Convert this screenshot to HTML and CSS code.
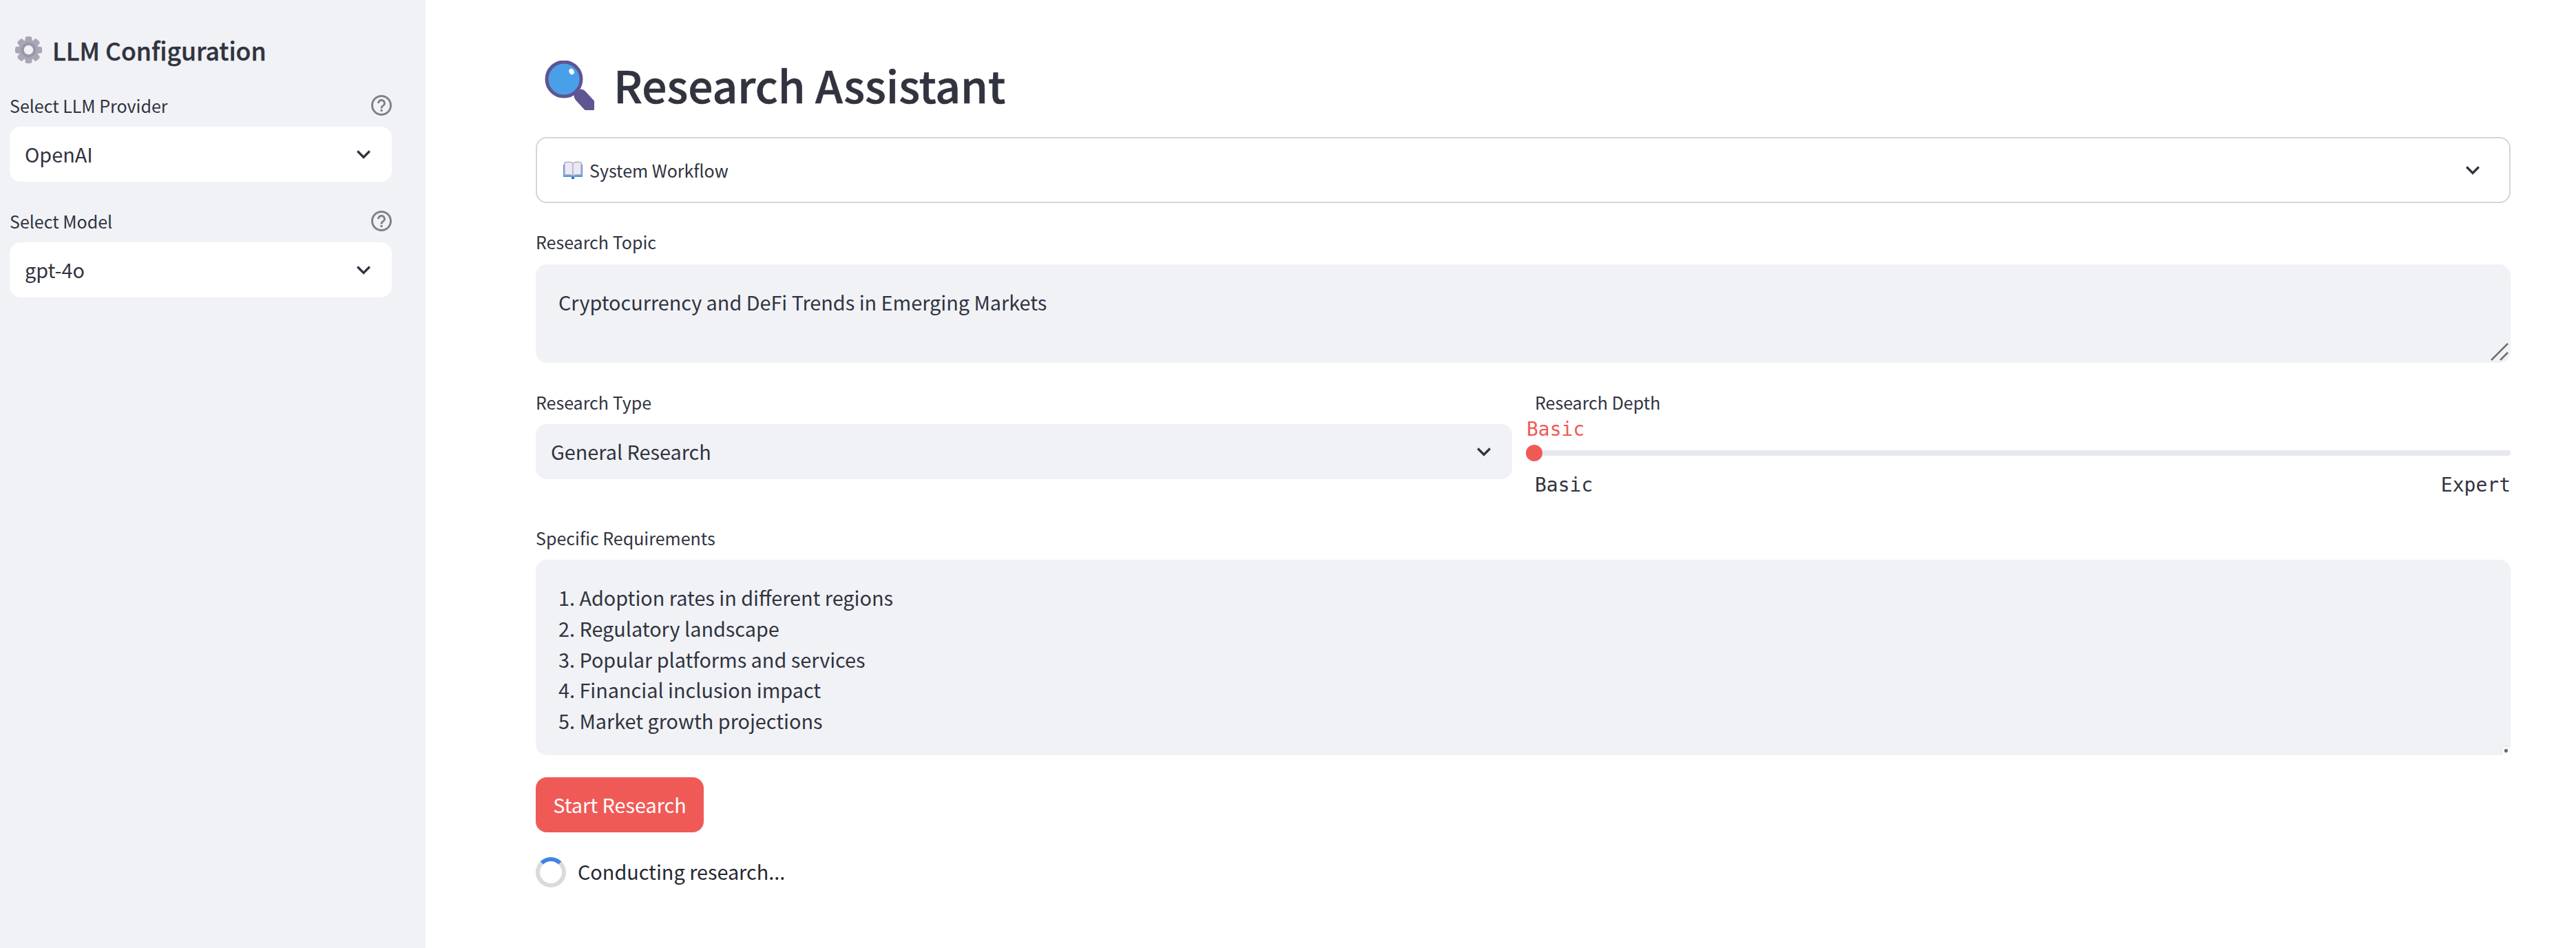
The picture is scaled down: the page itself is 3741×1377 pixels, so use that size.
FILE: index.html
```html
<!DOCTYPE html>
<html lang="en">
<head>
    <meta charset="UTF-8">
    <meta name="viewport" content="width=device-width, initial-scale=1.0">
    <title>Research Assistant</title>
    <link rel="stylesheet" href="styles.css">
</head>
<body>
    <aside class="sidebar">
        <h2 class="sidebar-title">
            <svg class="gear-icon" viewBox="0 0 40 40">
                <g fill="#aaa6b5">
                    <rect x="15" y="0" width="10" height="40" rx="3"/>
                    <rect x="15" y="0" width="10" height="40" rx="3" transform="rotate(45 20 20)"/>
                    <rect x="15" y="0" width="10" height="40" rx="3" transform="rotate(90 20 20)"/>
                    <rect x="15" y="0" width="10" height="40" rx="3" transform="rotate(135 20 20)"/>
                    <circle cx="20" cy="20" r="15"/>
                </g>
                <circle cx="20" cy="20" r="9" fill="#f0f2f6" stroke="#9a96a8" stroke-width="4"/>
            </svg>
            LLM Configuration
        </h2>

        <div class="side-field">
            <div class="side-label">
                <span>Select LLM Provider</span>
                <svg class="help-icon" viewBox="0 0 24 24"><path d="M11 18h2v-2h-2v2zm1-16C6.48 2 2 6.48 2 12s4.48 10 10 10 10-4.48 10-10S17.52 2 12 2zm0 18c-4.41 0-8-3.59-8-8s3.59-8 8-8 8 3.59 8 8-3.59 8-8 8zm0-14c-2.21 0-4 1.79-4 4h2c0-1.1.9-2 2-2s2 .9 2 2c0 2-3 1.75-3 5h2c0-2.25 3-2.5 3-5 0-2.21-1.79-4-4-4z"/></svg>
            </div>
            <div class="select select-white">
                <span>OpenAI</span>
                <svg class="chevron" viewBox="0 0 24 24"><path d="M16.59 8.59L12 13.17 7.41 8.59 6 10l6 6 6-6z"/></svg>
            </div>
        </div>

        <div class="side-field">
            <div class="side-label">
                <span>Select Model</span>
                <svg class="help-icon" viewBox="0 0 24 24"><path d="M11 18h2v-2h-2v2zm1-16C6.48 2 2 6.48 2 12s4.48 10 10 10 10-4.48 10-10S17.52 2 12 2zm0 18c-4.41 0-8-3.59-8-8s3.59-8 8-8 8 3.59 8 8-3.59 8-8 8zm0-14c-2.21 0-4 1.79-4 4h2c0-1.1.9-2 2-2s2 .9 2 2c0 2-3 1.75-3 5h2c0-2.25 3-2.5 3-5 0-2.21-1.79-4-4-4z"/></svg>
            </div>
            <div class="select select-white">
                <span>gpt-4o</span>
                <svg class="chevron" viewBox="0 0 24 24"><path d="M16.59 8.59L12 13.17 7.41 8.59 6 10l6 6 6-6z"/></svg>
            </div>
        </div>
    </aside>

    <main class="main">
        <h1 class="page-title">
            <svg class="lens-icon" viewBox="0 0 72 72">
                <path d="M46 45l4 4" stroke="#5f5593" stroke-width="8"/>
                <path d="M52 51l13 14" stroke="#5f5593" stroke-width="19" stroke-linecap="round"/>
                <circle cx="28" cy="27" r="25" fill="#4aa0e8" stroke="#5f5593" stroke-width="5"/>
                <ellipse cx="39" cy="16" rx="3.500" ry="4.500" fill="white" transform="rotate(-25 39 16)"/>
            </svg>
            <span class="page-title-text">Research Assistant</span>
        </h1>

        <div class="expander">
            <span class="expander-title">
                <svg class="book-icon" viewBox="0 0 30 26">
                    <path d="M1 5h28v18H1z" fill="#4a9ae0"/>
                    <path d="M3 2c4-1 9-1 12 1v18c-3-1.500-8-1.500-12-1z" fill="#ece9f5" stroke="#b4b1c4" stroke-width="1.500"/>
                    <path d="M27 2c-4-1-9-1-12 1v18c3-1.500 8-1.500 12-1z" fill="#ece9f5" stroke="#b4b1c4" stroke-width="1.500"/>
                    <path d="M13 23h4v3h-4z" fill="#2f6fb5"/>
                </svg>
                System Workflow
            </span>
            <svg class="chevron" viewBox="0 0 24 24"><path d="M16.59 8.59L12 13.17 7.41 8.59 6 10l6 6 6-6z"/></svg>
        </div>

        <label class="field-label topic-label" for="topic">Research Topic</label>
        <div class="box-wrap">
            <textarea class="text-box topic-box" id="topic">Cryptocurrency and DeFi Trends in Emerging Markets</textarea>
            <svg class="grip" viewBox="0 0 30 30">
                <path d="M4 28L28 4M17 28L28 17" stroke="#6e6e6e" stroke-width="2.500" fill="none"/>
            </svg>
        </div>

        <div class="two-cols">
            <div class="col-type">
                <div class="field-label">Research Type</div>
                <div class="select select-grey">
                    <span>General Research</span>
                    <svg class="chevron" viewBox="0 0 24 24"><path d="M16.59 8.59L12 13.17 7.41 8.59 6 10l6 6 6-6z"/></svg>
                </div>
            </div>
            <div class="col-depth">
                <div class="field-label depth-label">Research Depth</div>
                <div class="slider">
                    <span class="slider-value">Basic</span>
                    <div class="slider-track"><span class="slider-thumb"></span></div>
                </div>
                <div class="slider-ends">
                    <span>Basic</span>
                    <span>Expert</span>
                </div>
            </div>
        </div>

        <label class="field-label req-label" for="reqs">Specific Requirements</label>
        <div class="box-wrap">
            <textarea class="text-box req-box" id="reqs">1. Adoption rates in different regions
2. Regulatory landscape
3. Popular platforms and services
4. Financial inclusion impact
5. Market growth projections</textarea>
            <span class="grip-small"></span>
        </div>

        <button class="start-btn">Start Research</button>

        <div class="status">
            <span class="spinner"></span>
            <span class="status-text">Conducting research...</span>
        </div>
    </main>
</body>
</html>
```

FILE: styles.css
```css
* {
    box-sizing: border-box;
}
html, body {
    height: 100%;
    margin: 0;
    overflow: hidden;
}
body {
    display: flex;
    font-family: "Noto Sans CJK SC", "Noto Sans", sans-serif;
    color: #31333f;
    background: white;
}

/* sidebar */
.sidebar {
    width: 618px;
    flex: none;
    background: #f0f2f6;
    padding: 53px 49px 0 14px;
}
.sidebar-title {
    display: flex;
    align-items: center;
    gap: 15px;
    height: 39px;
    margin: 0 0 45px 8px;
    font-size: 35.500px;
    line-height: 39px;
    font-weight: 500;
    -webkit-text-stroke: 0.4px #31333f;
}
.gear-icon {
    width: 39px;
    height: 39px;
    flex: none;
}
.side-field {
    margin-bottom: 41px;
}
.side-label {
    display: flex;
    justify-content: space-between;
    align-items: center;
    height: 32px;
    margin-bottom: 15px;
    font-size: 25px;
    line-height: 32px;
}
.help-icon {
    width: 36px;
    height: 36px;
    margin-right: -3px;
    fill: #808288;
}

/* selects */
.select {
    display: flex;
    justify-content: space-between;
    align-items: center;
    height: 80px;
    border-radius: 16px;
    padding: 0 21px 0 22px;
    font-size: 28.800px;
}
.select span {
    margin-top: -2px;
}
.select-white {
    background: white;
}
.select-grey {
    background: #f0f2f6;
}
.chevron {
    width: 40px;
    height: 40px;
    flex: none;
    fill: #31333f;
}

/* main column */
.main {
    flex: 1;
    min-width: 0;
    padding: 0 95px 0 160px;
}
.page-title {
    display: flex;
    align-items: center;
    gap: 28px;
    height: 72px;
    margin: 88px 0 39px 13px;
    font-size: 64px;
    line-height: 72px;
    font-weight: 500;
    -webkit-text-stroke: 0.6px #31333f;
}
.page-title-text {
    margin-bottom: 4px;
}
.lens-icon {
    width: 72px;
    height: 72px;
    flex: none;
}
.expander {
    display: flex;
    justify-content: space-between;
    align-items: center;
    height: 96px;
    border: 2px solid #d6d6d8;
    border-radius: 16px;
    padding: 0 33px 0 37px;
}
.expander-title {
    display: flex;
    align-items: center;
    gap: 9px;
    font-size: 25px;
    line-height: 40px;
}
.book-icon {
    width: 30px;
    height: 26px;
    flex: none;
}
.field-label {
    display: block;
    height: 32px;
    margin-bottom: 15px;
    font-size: 25px;
    line-height: 30px;
}
.topic-label {
    margin-top: 41px;
    margin-bottom: 16px;
}
.req-label {
    margin-top: 43px;
}

/* text areas, the resize grips are drawn over the corner */
.box-wrap {
    position: relative;
    border-radius: 16px;
    overflow: hidden;
}
.text-box {
    display: block;
    width: 100%;
    border: none;
    outline: none;
    background: #f0f2f6;
    color: #31333f;
    font-family: inherit;
    font-size: 28.800px;
    line-height: 44.800px;
    padding: 32px 32px 32px 33px;
    resize: none;
}
.topic-box {
    height: 143px;
    padding-top: 33px;
}
.req-box {
    height: 284px;
    overflow: hidden;
    padding-top: 33px;
}
.grip {
    position: absolute;
    right: 2px;
    bottom: 2px;
    width: 30px;
    height: 30px;
}
.grip-small {
    position: absolute;
    right: 0;
    bottom: 0;
    width: 14px;
    height: 14px;
    border-top: 1px solid #e4e4e6;
    border-left: 1px solid #e4e4e6;
    background: radial-gradient(circle, #6e6e6e 2.500px, #f6f7f9 3px);
}

/* research type + depth */
.two-cols {
    display: flex;
    gap: 32px;
    margin-top: 42px;
}
.col-type {
    width: 1418px;
    flex: none;
}
.col-depth {
    flex: 1;
    min-width: 0;
}
.depth-label {
    margin-bottom: 0;
    margin-left: 1px;
}
.slider {
    display: flex;
    flex-direction: column;
    margin-left: 1px;
}
.slider-value {
    margin: 8px 0 0 -12px;
    font-family: "DejaVu Sans Mono", monospace;
    font-size: 28px;
    line-height: 30px;
    color: #ef5a57;
}
.slider-track {
    position: relative;
    height: 8px;
    margin-top: 15px;
    border-radius: 4px;
    background: #e6e9f1;
}
.slider-thumb {
    position: absolute;
    left: -13px;
    top: -8px;
    width: 24px;
    height: 24px;
    border-radius: 50%;
    background: #ef5a57;
}
.slider-ends {
    display: flex;
    justify-content: space-between;
    margin: 25px 0 0 1px;
    font-family: "DejaVu Sans Mono", monospace;
    font-size: 28px;
    line-height: 36px;
}

/* bottom */
.start-btn {
    display: block;
    width: 244px;
    height: 80px;
    margin-top: 32px;
    border: none;
    border-radius: 16px;
    background: #ef5a57;
    color: white;
    font-family: inherit;
    font-size: 28.800px;
    padding: 0 0 2px;
}
.status {
    display: flex;
    align-items: center;
    gap: 17px;
    margin-top: 36px;
    font-size: 28.800px;
    line-height: 44px;
    color: #262730;
}
.status-text {
    margin-top: -2px;
}
.spinner {
    width: 44px;
    height: 44px;
    flex: none;
    border-radius: 50%;
    border: 6px solid #d9dadc;
    border-top-color: #4183e0;
}
```
